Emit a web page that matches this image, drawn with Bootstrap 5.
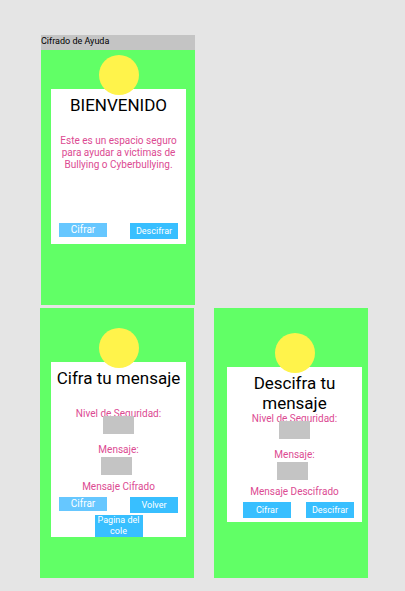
<!DOCTYPE html>
<html lang="es">
<head>
<meta charset="utf-8">
<meta name="viewport" content="width=device-width, initial-scale=1">
<title>Cifrado de Ayuda</title>
<link href="https://cdn.jsdelivr.net/npm/bootstrap@5.3.0/dist/css/bootstrap.min.css" rel="stylesheet">
<style>
body { background: #e5e5e5; color: #000; font-family: Roboto, "Liberation Sans", sans-serif; font-size: 10px; line-height: 12px; }
.board { display: grid; grid-template-columns: 1fr 1fr; gap: 3px 20px; padding: 35px 37px 13px 40px; }
.screen { background: #61ff66; min-height: 270px; }
.screen-home { grid-column: 1; margin: 0 -1px 0 1px; }
.screen-encode { grid-column: 1; }
.topbar { background: #c4c4c4; height: 15px; font-size: 9px; }
.screen-body { padding: 20px 8px 0 11px; }
.screen-home .screen-body { padding: 5px 9px 0 10px; }
.screen-decode .screen-body { padding: 25px 6px 0 13px; }
.sun { position: relative; z-index: 1; width: 40px; height: 40px; margin-bottom: -6px; background: #fff34b; }
.panel { background: #fff; padding: 6px 8px 0; min-height: 155px; }
.panel-tall { min-height: 175px; }
.panel-title { font-size: 17px; line-height: 20px; font-weight: 400; height: 40px; margin: 0 -4px; }
.pink { color: #dc4a92; }
.intro { margin: 0 -2px; min-height: 88px; }
.field { width: 31px; height: 18px; border: 0; padding: 0 2px; background: #c4c4c4; position: relative; font-size: 9px; }
.field-level { margin: -4px 0 10px; }
.field-text { margin: 1px 4px 6px 0; }
.result { margin-bottom: 4px; }
.act { --bs-btn-padding-x: 0; --bs-btn-padding-y: 0; --bs-btn-font-size: 9px; --bs-btn-line-height: 16px; --bs-btn-border-width: 0; --bs-btn-border-radius: 0; --bs-btn-color: #fff; --bs-btn-bg: #38bfff; --bs-btn-hover-color: #fff; --bs-btn-hover-bg: #1fa9ea; width: 48px; }
.act-soft { --bs-btn-bg: #66c7ff; --bs-btn-font-size: 10px; --bs-btn-line-height: 14px; }
.act-wrap { --bs-btn-line-height: 11px; white-space: normal; margin-top: 2px; }
.actions-end { padding-left: 8px; }
</style>
</head>
<body>
<main class="board">
  <section class="screen screen-home">
    <header class="topbar">Cifrado de Ayuda</header>
    <div class="screen-body d-flex flex-column align-items-center">
      <div class="sun rounded-circle"></div>
      <div class="panel w-100 text-center">
        <h1 class="panel-title">BIENVENIDO</h1>
        <p class="intro pink">Este es un espacio seguro para ayudar a victimas de Bullying o Cyberbullying.</p>
        <div class="d-flex justify-content-between align-items-start">
          <button type="button" class="btn act act-soft">Cifrar</button>
          <button type="button" class="btn act">Descifrar</button>
        </div>
      </div>
    </div>
  </section>
  <section class="screen screen-encode">
    <div class="screen-body d-flex flex-column align-items-center">
      <div class="sun rounded-circle"></div>
      <form class="panel panel-tall w-100 d-flex flex-column align-items-center text-center">
        <h2 class="panel-title">Cifra tu mensaje</h2>
        <label class="pink" for="level-a">Nivel de Seguridad:</label>
        <input class="field field-level" id="level-a" type="text">
        <label class="pink" for="text-a">Mensaje:</label>
        <input class="field field-text" id="text-a" type="text">
        <div class="result pink">Mensaje Cifrado</div>
        <div class="d-flex justify-content-between align-items-start w-100">
          <button type="button" class="btn act act-soft">Cifrar</button>
          <button type="button" class="btn act">Volver</button>
        </div>
        <button type="button" class="btn act act-wrap">Pagina del cole</button>
      </form>
    </div>
  </section>
  <section class="screen screen-decode">
    <div class="screen-body d-flex flex-column align-items-center">
      <div class="sun rounded-circle"></div>
      <form class="panel w-100 d-flex flex-column align-items-center text-center">
        <h2 class="panel-title">Descifra tu mensaje</h2>
        <label class="pink" for="level-b">Nivel de Seguridad:</label>
        <input class="field field-level" id="level-b" type="text">
        <label class="pink" for="text-b">Mensaje:</label>
        <input class="field field-text" id="text-b" type="text">
        <div class="result pink">Mensaje Descifrado</div>
        <div class="actions-end d-flex justify-content-between align-items-start w-100">
          <button type="button" class="btn act">Cifrar</button>
          <button type="button" class="btn act">Descifrar</button>
        </div>
      </form>
    </div>
  </section>
</main>
<script src="https://cdn.jsdelivr.net/npm/bootstrap@5.3.0/dist/js/bootstrap.bundle.min.js"></script>
</body>
</html>
